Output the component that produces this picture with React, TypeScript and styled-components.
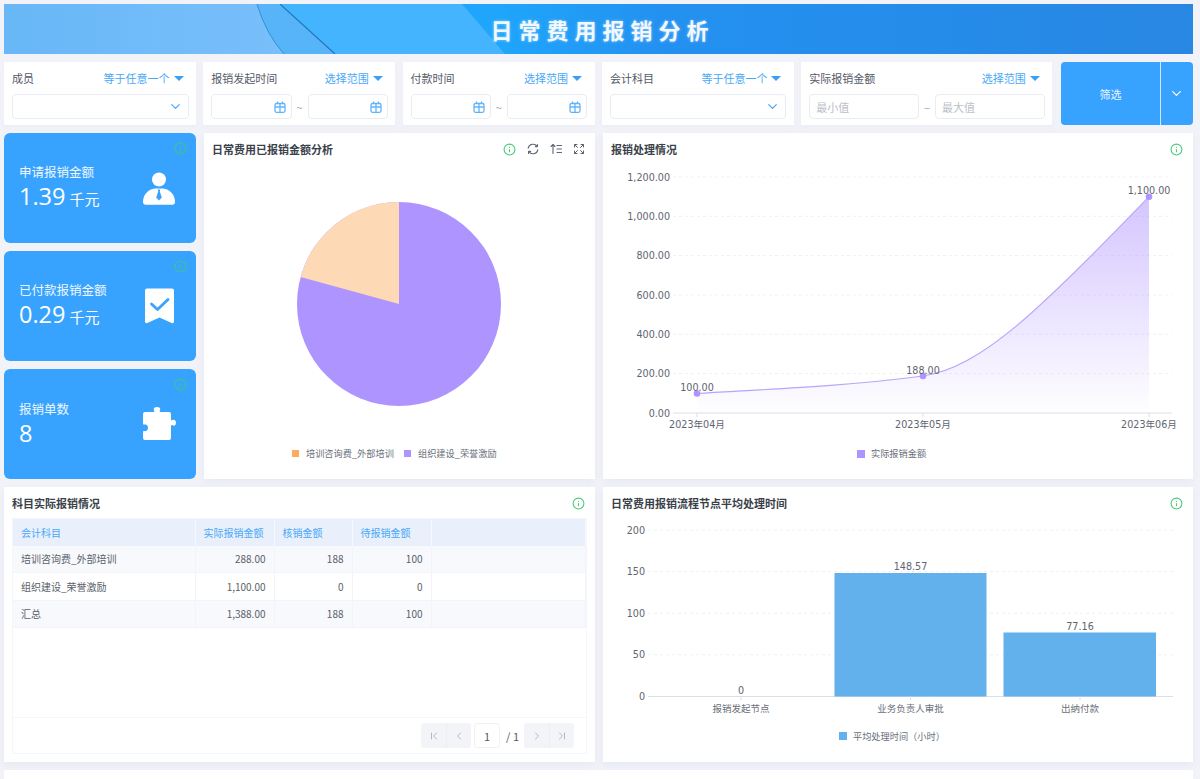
import React from "react";
import styled, { createGlobalStyle } from "styled-components";
import {
  ChevronDown,
  ChevronFirst,
  ChevronLast,
  ChevronLeft,
  ChevronRight,
  Expand,
  Info,
} from "lucide-react";

const FONT = `"Noto Sans CJK SC", "Noto Sans", sans-serif`;
const AXIS_FONT = `"DejaVu Sans", "Noto Sans CJK SC", sans-serif`;

const GlobalStyle = createGlobalStyle`
  html, body {
    margin: 0;
    padding: 0;
    background: #f2f3f9;
    font-family: ${FONT};
  }
  * { box-sizing: border-box; }
`;

const Page = styled.div`
  width: 1200px;
  height: 779px;
  overflow: hidden;
  padding: 4px 7px 0 4px;
  display: flex;
  flex-direction: column;
  gap: 8px;
`;

const Banner = styled.header`
  position: relative;
  height: 50px;
  overflow: hidden;
  background: linear-gradient(90deg, #1fa5fb 42%, #2391f1 55%, #2887e2 100%);
  display: flex;
  align-items: center;
  justify-content: center;
`;

const BannerArt = styled.svg`
  position: absolute;
  left: 0;
  top: 0;
`;

const BannerTitle = styled.h1`
  position: relative;
  margin: 0;
  padding-left: 8px;
  color: #f2f8ff;
  font-size: 22px;
  font-weight: 700;
  letter-spacing: 6px;
  text-shadow: 0 0 3px rgba(255, 255, 255, 0.5);
`;

const FilterRow = styled.section`
  display: grid;
  grid-template-columns: 192px 192px 192px 192px 251px 133.500px;
  column-gap: 7.300px;
  height: 63px;
`;

const FilterCard = styled.div`
  background: #fff;
  padding: 7px 7.500px 6px 8px;
  display: flex;
  flex-direction: column;
  gap: 7px;
  box-shadow: 0 2px 5px rgba(120, 130, 170, 0.05);
`;

const FilterHead = styled.div`
  display: flex;
  justify-content: space-between;
  align-items: center;
  height: 18px;
  font-size: 11px;
  color: #555a66;
`;

const FilterMode = styled.span`
  color: #4aa8f8;
  display: flex;
  align-items: center;
  gap: 4px;
  padding-right: 5px;
  &::after {
    content: "";
    border-left: 5px solid transparent;
    border-right: 5px solid transparent;
    border-top: 5px solid #3a9ff5;
    margin-top: 1px;
  }
`;

const FilterInputs = styled.div`
  display: flex;
  align-items: center;
  gap: 5px;
  height: 25px;
  color: #9aa0ac;
  font-size: 11px;
`;

const Field = styled.div<{ $end?: boolean }>`
  flex: 1;
  height: 25px;
  border: 1px solid #e9ecf2;
  border-radius: 4px;
  background: #fff;
  display: flex;
  align-items: center;
  justify-content: ${(p) => (p.$end ? "flex-end" : "flex-start")};
  padding: 0 5px 0 6px;
  color: #bcc0c8;
  font-size: 11px;
`;

const FilterButton = styled.div`
  display: flex;
  margin-left: 1.500px;
  background: #38a3ff;
  border-radius: 4px;
  color: #eaf5ff;
  font-size: 11px;
`;

const ButtonLabel = styled.div`
  flex: 1;
  display: flex;
  align-items: center;
  justify-content: center;
`;

const ButtonArrow = styled.div`
  width: 33px;
  border-left: 1px solid #cfe8ff;
  display: flex;
  align-items: center;
  justify-content: center;
`;

const MainGrid = styled.main`
  display: grid;
  grid-template-columns: 192px 391px 590px;
  grid-template-rows: 346px 275px;
  gap: 8px;
`;

const StatColumn = styled.div`
  display: flex;
  flex-direction: column;
  gap: 8px;
`;

const StatCard = styled.div`
  position: relative;
  flex: 1;
  background: #38a3ff;
  border-radius: 6px;
  color: #fff;
  display: flex;
  align-items: center;
  justify-content: space-between;
  padding: 0 20px 0 15px;
`;

const StatInfo = styled.span`
  position: absolute;
  top: 9px;
  right: 9px;
  color: #3cc48a;
  display: flex;
`;

const StatTitle = styled.div`
  font-size: 12.500px;
  line-height: 18px;
  color: #eef7ff;
`;

const StatValue = styled.div`
  font-family: "Open Sans", "Noto Sans", sans-serif;
  font-size: 23.500px;
  line-height: 30px;
  font-weight: 400;
`;

const StatUnit = styled.span`
  font-family: ${FONT};
  font-size: 15px;
  margin-left: 4px;
`;

const StatIcon = styled.div`
  width: 34px;
  display: flex;
  justify-content: center;
`;

const Panel = styled.section<{ $wide?: boolean }>`
  background: #fff;
  display: flex;
  flex-direction: column;
  box-shadow: 0 3px 8px rgba(120, 130, 170, 0.09);
  grid-column: ${(p) => (p.$wide ? "1 / span 2" : "auto")};
`;

const PanelHead = styled.div`
  height: 30px;
  flex: none;
  padding: 2px 10px 0 8px;
  display: flex;
  align-items: center;
  justify-content: space-between;
`;

const PanelTitle = styled.h2`
  margin: 0;
  font-size: 11px;
  font-weight: 700;
  color: #3a3f4a;
`;

const PanelTools = styled.div`
  display: flex;
  align-items: center;
  gap: 11px;
  color: #5f6672;
`;

const GreenInfo = styled(Info)`
  color: #4cc97a;
`;

const Chart = styled.svg`
  display: block;
  text {
    font-family: ${AXIS_FONT};
    font-size: 9.600px;
    fill: #5e6470;
  }
  text.legend {
    font-family: ${FONT};
    font-size: 9.200px;
    fill: #6a6f7a;
  }
  text.category {
    font-family: ${FONT};
    font-size: 9.500px;
    fill: #6a6f7a;
  }
`;

const TableFrame = styled.div`
  flex: 1;
  margin: 1px 8px 8px;
  border: 1px solid #f5f6fb;
  display: flex;
  flex-direction: column;
`;

const DataTable = styled.table`
  width: 100%;
  border-collapse: collapse;
  table-layout: fixed;
  font-size: 10px;
  color: #5a5f6a;
  th {
    height: 26.500px;
    background: #e9f0fb;
    color: #4aa8f8;
    font-weight: 400;
    text-align: left;
    padding: 0 8px;
    border-right: 1px solid #f5f8fd;
  }
  td {
    height: 27.300px;
    padding: 0 8px;
    text-align: right;
    border-right: 1px solid #f1f4fa;
    border-bottom: 1px solid #f1f4fa;
  }
  td:first-child {
    text-align: left;
  }
  tbody tr:nth-child(odd) td {
    background: #f7f9fd;
  }
`;

const TableSpacer = styled.div`
  flex: 1;
`;

const Pager = styled.div`
  height: 36px;
  border-top: 1px solid #f5f6fb;
  display: flex;
  align-items: center;
  justify-content: flex-end;
  padding-right: 12px;
  font-size: 11px;
  color: #555a66;
`;

const PagerGroup = styled.div`
  display: flex;
  background: #f3f4f8;
  border-radius: 3px;
  height: 25px;
  color: #b4b8c2;
`;

const PagerButton = styled.div`
  width: 25px;
  display: flex;
  align-items: center;
  justify-content: center;
  & + & {
    border-left: 1px solid #eceef3;
  }
`;

const PagerInput = styled.div`
  width: 26px;
  height: 25px;
  margin: 0 3px;
  border: 1px solid #f1f2f6;
  border-radius: 3px;
  display: flex;
  align-items: center;
  justify-content: center;
`;

const PagerTotal = styled.span`
  margin: 0 5px 0 3px;
`;

const BottomStrip = styled.div`
  flex: 1;
  background: #fff;
`;

const PersonIcon = () => (
  <svg width="32" height="33" viewBox="0 0 32 33">
    <circle cx="16" cy="7.500" r="7" fill="#fff" />
    <path d="M0 30c0-7.500 5.500-13 12-13.500h8C26.500 17 32 22.500 32 30c0 1.600-1 2.800-2.500 2.800H2.500C1 32.800 0 31.600 0 30z" fill="#fff" />
    <path d="M14.800 17.500h2.400l-.4 2 2 6-2.800 3-2.800-3 2-6z" fill="#38a3ff" />
  </svg>
);

const BadgeIcon = () => (
  <svg width="29" height="36" viewBox="0 0 29 36">
    <path d="M2 .500h25a2 2 0 0 1 2 2V33.500c0 1.300-1.100 2-2.300 1.500L14.500 29.500 2.300 35C1.100 35.500 0 34.800 0 33.500V2.500a2 2 0 0 1 2-2z" fill="#fff" />
    <path d="M6.500 16l6 5.500L23 11.500" fill="none" stroke="#38a3ff" strokeWidth="2.800" strokeLinecap="round" strokeLinejoin="round" />
  </svg>
);

const PuzzleIcon = () => (
  <svg width="34" height="34" viewBox="0 0 34 34">
    <path
      d="M3 5h8.500c.9 0 1-1 .6-1.700C10.800 1.400 12.800 0 15 0s4.200 1.400 2.900 3.300c-.4.700-.3 1.700.6 1.700H27a2 2 0 0 1 2 2v5.500c0 .9.900 1.100 1.600.6C32.300 11.800 34 13.500 34 15.700s-1.700 3.900-3.400 2.600c-.7-.5-1.600-.3-1.600.6V31a2 2 0 0 1-2 2H3a2 2 0 0 1-2-2v-6c0-1 .8-1.300 1.700-1 1.800.6 3.300-.9 3.300-3.200s-1.500-3.800-3.300-3.200c-.9.300-1.700 0-1.700-1V7a2 2 0 0 1 2-2z"
      fill="#fff"
    />
  </svg>
);

const CalendarIcon = () => (
  <svg width="12" height="12" viewBox="0 0 12 12" fill="none" stroke="#5eb4fb" strokeWidth="1.300">
    <rect x="1" y="2.500" width="10" height="8.800" rx="1.500" />
    <path d="M1 6h10M6 2.500v8.800" />
    <path d="M3.500.500v2.500M8.500.500v2.500" />
  </svg>
);

const SyncIcon = () => (
  <svg width="12" height="12" viewBox="0 0 12 12" fill="none" stroke="currentColor" strokeWidth="1.100" strokeLinecap="round" strokeLinejoin="round">
    <path d="M1.200 5.200a4.900 4.900 0 0 1 8.900-1.800" />
    <path d="M10.800 6.800a4.900 4.900 0 0 1-8.900 1.800" />
    <path d="M10.400 1.600v2h-2M1.600 10.400v-2h2" />
  </svg>
);

const SortIcon = () => (
  <svg width="12" height="12" viewBox="0 0 12 12" fill="none" stroke="currentColor" strokeWidth="1.100" strokeLinecap="round" strokeLinejoin="round">
    <path d="M3 10.500v-9M1 3.500l2-2 2 2" />
    <path d="M7 2.500h4.500M7 6h4.500M7 9.500h4.500" />
  </svg>
);

const stats = [
  { title: "申请报销金额", value: "1.39", unit: "千元", icon: <PersonIcon /> },
  { title: "已付款报销金额", value: "0.29", unit: "千元", icon: <BadgeIcon /> },
  { title: "报销单数", value: "8", unit: "", icon: <PuzzleIcon /> },
];

const DateRange = () => (
  <FilterInputs>
    <Field $end>
      <CalendarIcon />
    </Field>
    ~
    <Field $end>
      <CalendarIcon />
    </Field>
  </FilterInputs>
);

const SelectField = () => (
  <FilterInputs>
    <Field $end>
      <ChevronDown size={15} color="#4aa8f8" />
    </Field>
  </FilterInputs>
);

const PieChart = () => (
  <Chart width="391" height="316" viewBox="204 163 391 316">
    <circle cx="399" cy="304" r="102" fill="#ae94ff" />
    <path d="M399 304 L300.600 277 A102 102 0 0 1 399 202 Z" fill="#fdd9b5" />
    <rect x="292" y="450" width="7" height="7" fill="#ffab5c" />
    <text className="legend" x="306" y="457">培训咨询费_外部培训</text>
    <rect x="404" y="450" width="7" height="7" fill="#ae94ff" />
    <text className="legend" x="418" y="457">组织建设_荣誉激励</text>
  </Chart>
);

const lineTicks = [
  ["1,200.00", 177],
  ["1,000.00", 216.300],
  ["800.00", 255.600],
  ["600.00", 295],
  ["400.00", 334.300],
  ["200.00", 373.600],
  ["0.00", 413],
] as const;

const linePoints = [
  { x: 697, y: 393.500, label: "100.00", month: "2023年04月" },
  { x: 923, y: 376, label: "188.00", month: "2023年05月" },
  { x: 1149, y: 196.700, label: "1,100.00", month: "2023年06月" },
];

const LINE_PATH = "M697 393.500 C772 389 848 386 923 376 C980 368 1040 310 1149 196.700";

const LineChart = () => (
  <Chart width="590" height="316" viewBox="603 163 590 316">
    <defs>
      <linearGradient id="lineFill" x1="0" y1="0" x2="0" y2="1">
        <stop offset="0" stopColor="#b196ff" stopOpacity="0.55" />
        <stop offset="1" stopColor="#b196ff" stopOpacity="0.01" />
      </linearGradient>
    </defs>
    {lineTicks.slice(0, 6).map(([label, y]) => (
      <line key={label} x1="673" x2="1172" y1={y} y2={y} stroke="#eef0f4" strokeDasharray="3 3" />
    ))}
    <path d={`${LINE_PATH} L1149 413 L697 413 Z`} fill="url(#lineFill)" />
    <path d={LINE_PATH} fill="none" stroke="#b9a4fb" strokeWidth="1.200" />
    <line x1="673" x2="1172" y1="413" y2="413" stroke="#dcdfe6" />
    {lineTicks.map(([label, y]) => (
      <text key={label} x="670" y={y + 3.500} textAnchor="end">{label}</text>
    ))}
    {linePoints.map((p) => (
      <g key={p.x}>
        <line x1={p.x} x2={p.x} y1="413" y2="417" stroke="#dcdfe6" />
        <circle cx={p.x} cy={p.y} r="3.300" fill="#ae94ff" />
        <text x={p.x} y={p.y - 2.500} textAnchor="middle">{p.label}</text>
        <text x={p.x} y="428" textAnchor="middle">{p.month}</text>
      </g>
    ))}
    <rect x="857" y="450" width="8" height="8" fill="#ae94ff" />
    <text className="legend" x="871" y="457">实际报销金额</text>
  </Chart>
);

const barTicks = [
  ["200", 530],
  ["150", 571.600],
  ["100", 613.200],
  ["50", 654.800],
  ["0", 696.500],
] as const;

const bars = [
  { x: 666, width: 152, value: "0", label: "报销发起节点", center: 741, h: 0 },
  { x: 834.500, width: 152, value: "148.57", label: "业务负责人审批", center: 910.500, h: 123.500 },
  { x: 1003.500, width: 152.500, value: "77.16", label: "出纳付款", center: 1080, h: 64 },
];

const BarChart = () => (
  <Chart width="590" height="245" viewBox="603 517 590 245">
    {barTicks.slice(0, 4).map(([label, y]) => (
      <line key={label} x1="648" x2="1173" y1={y} y2={y} stroke="#eef0f4" strokeDasharray="3 3" />
    ))}
    <line x1="648" x2="1173" y1="696.500" y2="696.500" stroke="#dcdfe6" />
    {barTicks.map(([label, y]) => (
      <text key={label} x="645" y={y + 3.500} textAnchor="end">{label}</text>
    ))}
    {bars.map((b) => (
      <g key={b.label}>
        <rect x={b.x} y={696.500 - b.h} width={b.width} height={b.h} fill="#62b0ec" />
        <line x1={b.center} x2={b.center} y1="696.500" y2="700" stroke="#dcdfe6" />
        <text x={b.center} y={696.500 - b.h - 3} textAnchor="middle">{b.value}</text>
        <text className="category" x={b.center} y="712" textAnchor="middle">{b.label}</text>
      </g>
    ))}
    <rect x="839" y="732" width="8" height="8" fill="#62b0ec" />
    <text className="legend" x="853" y="740">平均处理时间（小时）</text>
  </Chart>
);

const rows = [
  ["培训咨询费_外部培训", "288.00", "188", "100"],
  ["组织建设_荣誉激励", "1,100.00", "0", "0"],
  ["汇总", "1,388.00", "188", "100"],
];

export default function App() {
  return (
    <Page>
      <GlobalStyle />
      <Banner>
        <BannerArt width="1189" height="50" viewBox="0 0 1189 50">
          <defs>
            <linearGradient id="bannerLeft" x1="0" y1="0" x2="1" y2="0">
              <stop offset="0" stopColor="#68b7f7" />
              <stop offset="1" stopColor="#78bffb" />
            </linearGradient>
          </defs>
          <path d="M0 0 H458 L501 50 H0 Z" fill="#45b4ff" />
          <path d="M0 0 H253 Q262 30 280 50 H0 Z" fill="url(#bannerLeft)" />
          <path d="M253 0 H276 L331 50 H280 Q262 30 253 0 Z" fill="#58b4f9" />
          <path d="M253 0 Q262 30 280 50" fill="none" stroke="#2a86cc" strokeWidth="0.800" />
          <path d="M276 0 L331 50" fill="none" stroke="#1f78c0" strokeWidth="1.200" />
        </BannerArt>
        <BannerTitle>日常费用报销分析</BannerTitle>
      </Banner>

      <FilterRow>
        <FilterCard>
          <FilterHead>成员<FilterMode>等于任意一个</FilterMode></FilterHead>
          <SelectField />
        </FilterCard>
        <FilterCard>
          <FilterHead>报销发起时间<FilterMode>选择范围</FilterMode></FilterHead>
          <DateRange />
        </FilterCard>
        <FilterCard>
          <FilterHead>付款时间<FilterMode>选择范围</FilterMode></FilterHead>
          <DateRange />
        </FilterCard>
        <FilterCard>
          <FilterHead>会计科目<FilterMode>等于任意一个</FilterMode></FilterHead>
          <SelectField />
        </FilterCard>
        <FilterCard>
          <FilterHead>实际报销金额<FilterMode>选择范围</FilterMode></FilterHead>
          <FilterInputs>
            <Field>最小值</Field>
            <span>–</span>
            <Field>最大值</Field>
          </FilterInputs>
        </FilterCard>
        <FilterButton>
          <ButtonLabel>筛选</ButtonLabel>
          <ButtonArrow><ChevronDown size={15} color="#fff" /></ButtonArrow>
        </FilterButton>
      </FilterRow>

      <MainGrid>
        <StatColumn>
          {stats.map((s) => (
            <StatCard key={s.title}>
              <StatInfo><Info size={13} /></StatInfo>
              <div>
                <StatTitle>{s.title}</StatTitle>
                <StatValue>
                  {s.value}
                  {s.unit && <StatUnit>{s.unit}</StatUnit>}
                </StatValue>
              </div>
              <StatIcon>{s.icon}</StatIcon>
            </StatCard>
          ))}
        </StatColumn>

        <Panel>
          <PanelHead>
            <PanelTitle>日常费用已报销金额分析</PanelTitle>
            <PanelTools>
              <GreenInfo size={13} />
              <SyncIcon />
              <SortIcon />
              <Expand size={12} />
            </PanelTools>
          </PanelHead>
          <PieChart />
        </Panel>

        <Panel>
          <PanelHead>
            <PanelTitle>报销处理情况</PanelTitle>
            <GreenInfo size={13} />
          </PanelHead>
          <LineChart />
        </Panel>

        <Panel $wide>
          <PanelHead>
            <PanelTitle>科目实际报销情况</PanelTitle>
            <GreenInfo size={13} />
          </PanelHead>
          <TableFrame>
            <DataTable>
              <colgroup>
                <col style={{ width: 182 }} />
                <col style={{ width: 79 }} />
                <col style={{ width: 78 }} />
                <col style={{ width: 79 }} />
                <col />
              </colgroup>
              <thead>
                <tr>
                  <th>会计科目</th>
                  <th>实际报销金额</th>
                  <th>核销金额</th>
                  <th>待报销金额</th>
                  <th />
                </tr>
              </thead>
              <tbody>
                {rows.map((r) => (
                  <tr key={r[0]}>
                    {r.map((c, i) => <td key={i}>{c}</td>)}
                    <td />
                  </tr>
                ))}
              </tbody>
            </DataTable>
            <TableSpacer />
            <Pager>
              <PagerGroup>
                <PagerButton><ChevronFirst size={12} /></PagerButton>
                <PagerButton><ChevronLeft size={12} /></PagerButton>
              </PagerGroup>
              <PagerInput>1</PagerInput>
              <PagerTotal>/ 1</PagerTotal>
              <PagerGroup>
                <PagerButton><ChevronRight size={12} /></PagerButton>
                <PagerButton><ChevronLast size={12} /></PagerButton>
              </PagerGroup>
            </Pager>
          </TableFrame>
        </Panel>

        <Panel>
          <PanelHead>
            <PanelTitle>日常费用报销流程节点平均处理时间</PanelTitle>
            <GreenInfo size={13} />
          </PanelHead>
          <BarChart />
        </Panel>
      </MainGrid>
      <BottomStrip />
    </Page>
  );
}
